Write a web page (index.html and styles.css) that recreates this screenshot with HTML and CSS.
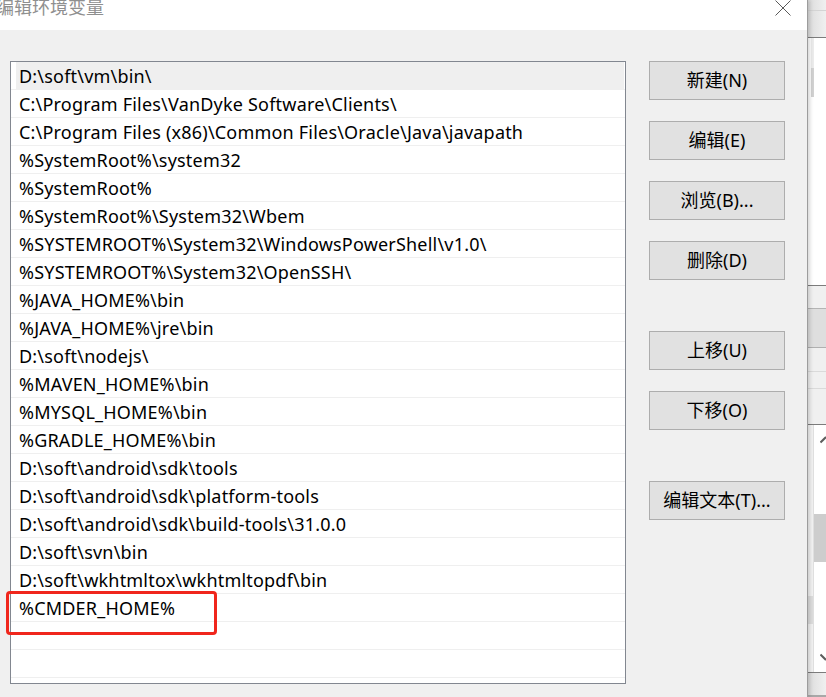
FILE: index.html
```html
<!DOCTYPE html>
<html lang="zh-CN">
<head>
<meta charset="utf-8">
<title>编辑环境变量</title>
<link rel="stylesheet" href="styles.css">
</head>
<body>
<div class="dialog">
  <div class="titlebar">
    <span class="title">编辑环境变量</span>
    <svg class="close" width="16" height="16" viewBox="0 0 16 16"><path d="M0.5 0.5 L15.5 15.5 M15.5 0.5 L0.5 15.5" stroke="#5a5a5a" stroke-width="1" fill="none"/></svg>
  </div>
  <div class="body">
    <div class="list">
      <div class="row selected">D:\soft\vm\bin\</div>
      <div class="row">C:\Program Files\VanDyke Software\Clients\</div>
      <div class="row">C:\Program Files (x86)\Common Files\Oracle\Java\javapath</div>
      <div class="row">%SystemRoot%\system32</div>
      <div class="row">%SystemRoot%</div>
      <div class="row">%SystemRoot%\System32\Wbem</div>
      <div class="row">%SYSTEMROOT%\System32\WindowsPowerShell\v1.0\</div>
      <div class="row">%SYSTEMROOT%\System32\OpenSSH\</div>
      <div class="row">%JAVA_HOME%\bin</div>
      <div class="row">%JAVA_HOME%\jre\bin</div>
      <div class="row">D:\soft\nodejs\</div>
      <div class="row">%MAVEN_HOME%\bin</div>
      <div class="row">%MYSQL_HOME%\bin</div>
      <div class="row">%GRADLE_HOME%\bin</div>
      <div class="row">D:\soft\android\sdk\tools</div>
      <div class="row">D:\soft\android\sdk\platform-tools</div>
      <div class="row">D:\soft\android\sdk\build-tools\31.0.0</div>
      <div class="row">D:\soft\svn\bin</div>
      <div class="row">D:\soft\wkhtmltox\wkhtmltopdf\bin</div>
      <div class="row">%CMDER_HOME%</div>
      <div class="row"></div>
      <div class="row"></div>
      <div class="row"></div>
    </div>
    <div class="buttons">
      <button class="btn">新建(N)</button>
      <button class="btn">编辑(E)</button>
      <button class="btn">浏览(B)...</button>
      <button class="btn">删除(D)</button>
      <button class="btn spaced">上移(U)</button>
      <button class="btn">下移(O)</button>
      <button class="btn spaced">编辑文本(T)...</button>
    </div>
    <div class="highlight"></div>
  </div>
</div>
<div class="bgwin">
  <div class="bg-head"><div class="bg-head-top"></div></div>
  <div class="bg-pane">
    <div class="bg-track"><div class="bg-thumb"></div></div>
  </div>
  <div class="bg-rows">
    <div class="bg-r r1"></div>
    <div class="bg-r r2"></div>
    <div class="bg-r r3"></div>
    <div class="bg-r r4"></div>
    <div class="bg-r r5"></div>
  </div>
  <div class="bg-pane2">
    <div class="bg-left">
      <div class="bg-left-top"></div>
      <div class="bg-left-patch"></div>
    </div>
    <div class="bg-scroll">
      <svg class="arrow" width="6" height="10" viewBox="0 0 6 10"><path d="M0.5 8.5 L6 3" stroke="#5c5c5c" stroke-width="2" fill="none"/></svg>
      <div class="bg-sthumb"></div>
      <svg class="arrow down" width="6" height="10" viewBox="0 0 6 10"><path d="M0.5 1.5 L6 7" stroke="#5c5c5c" stroke-width="2" fill="none"/></svg>
    </div>
  </div>
  <div class="bg-foot"></div>
</div>
</body>
</html>
```
FILE: styles.css
```css
html, body {
  margin: 0;
  padding: 0;
}
body {
  width: 826px;
  height: 697px;
  overflow: hidden;
  display: flex;
  font-family: "Noto Sans", "Noto Sans CJK SC", sans-serif;
  font-size: 18px;
  color: #000;
  background: #fff;
}
.dialog {
  width: 808px;
  flex: none;
  box-sizing: border-box;
  border-right: 1px solid #9c9c9c;
  display: flex;
  flex-direction: column;
  position: relative;
  z-index: 1;
  box-shadow: 2px 0 4px rgba(0, 0, 0, 0.16);
}
.titlebar {
  height: 30px;
  flex: none;
  background: #fff;
  display: flex;
  justify-content: space-between;
  align-items: flex-start;
}
.title {
  font-family: "Noto Sans CJK SC", sans-serif;
  font-size: 18px;
  line-height: 18px;
  color: #8f8f8f;
  margin-left: -4px;
  margin-top: -3px;
}
.close {
  margin-right: 16px;
  display: block;
}
.body {
  flex: 1;
  background: #f0f0f0;
  display: flex;
  align-items: flex-start;
  padding: 31px 0 0 10px;
  gap: 23px;
  position: relative;
}
.list {
  width: 616px;
  height: 623px;
  box-sizing: border-box;
  border: 1px solid #828790;
  background: #fff;
  overflow: hidden;
  flex: none;
}
.row {
  height: 28px;
  box-sizing: border-box;
  border-bottom: 1px solid #efefef;
  padding-left: 8px;
  padding-top: 1px;
  line-height: 26px;
  letter-spacing: 0.2px;
  white-space: nowrap;
}
.row.selected {
  background: #efefef;
  box-shadow: inset 5px 0 0 #fff, inset -1px 0 0 #fff;
}
.buttons {
  display: flex;
  flex-direction: column;
  gap: 21px;
  margin-top: 0;
}
.btn {
  width: 136px;
  height: 39px;
  box-sizing: border-box;
  background: #e1e1e1;
  border: 1px solid #adadad;
  border-radius: 0;
  font-family: "Noto Sans", "Noto Sans CJK SC", sans-serif;
  font-size: 18px;
  color: #000;
  padding: 0 0 3px 0;
  display: flex;
  align-items: center;
  justify-content: center;
}
.btn.spaced {
  margin-top: 30px;
}
.highlight {
  position: absolute;
  left: 6px;
  top: 561px;
  width: 211px;
  height: 44px;
  box-sizing: border-box;
  border: 3px solid #f0261c;
  border-radius: 4px;
}
/* background window strip */
.bgwin {
  flex: 1;
  display: flex;
  flex-direction: column;
  background: #f0f0f0;
}
.bg-head {
  height: 37px;
  flex: none;
  background: linear-gradient(to right, #dcdcdc, #f0f0f0);
  border-bottom: 1px solid #7c7c7c;
}
.bg-head-top {
  height: 10px;
  border-bottom: 1px solid #d4d4d4;
}
.bg-pane {
  height: 247px;
  flex: none;
  background: #fff;
  border-bottom: 1px solid #7c7c7c;
  padding-left: 3px;
}
.bg-track {
  width: 3px;
  height: 59px;
  background: #ececec;
  display: flex;
  flex-direction: column;
  justify-content: flex-end;
}
.bg-thumb {
  height: 29px;
  background: #d2d2d2;
}
.bg-rows {
  flex: none;
  display: flex;
  flex-direction: column;
  border-bottom: 1px solid #7c7c7c;
}
.bg-r {
  box-sizing: border-box;
  background: #f0f0f0;
}
.r1 { height: 23px; border-bottom: 1px solid #b4b4b4; }
.r2 { height: 39px; background: #dedede; border-bottom: 1px solid #b0b0b0; }
.r3 { height: 24px; border-bottom: 1px solid #dadada; }
.r4 { height: 17px; border-bottom: 1px solid #dadada; }
.r5 { height: 35px; }
.bg-pane2 {
  height: 247px;
  flex: none;
  background: #fff;
  border-bottom: 1px solid #7c7c7c;
  display: flex;
}
.bg-left {
  width: 5px;
  flex: none;
  background: #f3f3f3;
  border-right: 1px solid #e0e0e0;
  display: flex;
  flex-direction: column;
}
.bg-left-top {
  height: 30px;
}
.bg-left-patch {
  margin-top: 141px;
  height: 28px;
  background: #dedede;
}
.bg-scroll {
  flex: 1;
  display: flex;
  flex-direction: column;
  align-items: flex-end;
}
.arrow {
  display: block;
  margin-top: 9px;
}
.bg-sthumb {
  width: 12px;
  height: 48px;
  background: #cdcdcd;
  margin-top: 70px;
}
.arrow.down {
  margin-top: 91px;
}
.bg-foot {
  flex: 1;
  background: linear-gradient(to right, #dcdcdc, #f0f0f0);
  box-shadow: inset 0 -2px 0 #a8a8a8;
}
```
